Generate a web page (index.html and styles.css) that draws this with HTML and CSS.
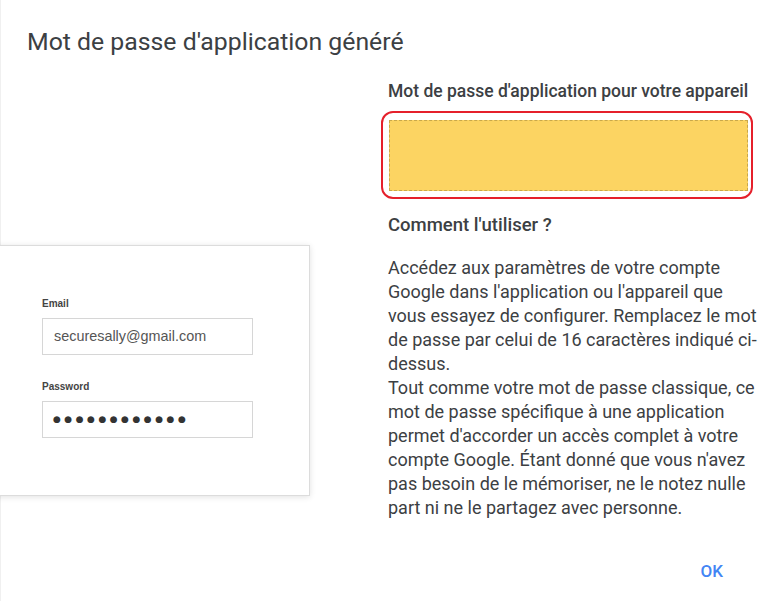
FILE: index.html
```html
<!DOCTYPE html>
<html lang="fr">
<head>
<meta charset="utf-8">
<link rel="stylesheet" href="styles.css">
</head>
<body>
<div class="dialog">
  <h1 class="title">Mot de passe d'application généré</h1>
  <div class="content">
    <div class="left">
      <div class="card">
        <div class="label">Email</div>
        <div class="field">securesally@gmail.com</div>
        <div class="label label-pw">Password</div>
        <div class="field dots">●●●●●●●●●●●●</div>
      </div>
    </div>
    <div class="right">
      <h2 class="subhead">Mot de passe d'application pour votre appareil</h2>
      <div class="highlight">
        <div class="pw-box"></div>
      </div>
      <h2 class="subhead how">Comment l'utiliser ?</h2>
      <p class="text">Accédez aux paramètres de votre compte Google dans l'application ou l'appareil que vous essayez de configurer. Remplacez le mot de passe par celui de 16 caractères indiqué ci-dessus.<br>Tout comme votre mot de passe classique, ce mot de passe spécifique à une application permet d'accorder un accès complet à votre compte Google. Étant donné que vous n'avez pas besoin de le mémoriser, ne le notez nulle part ni ne le partagez avec personne.</p>
    </div>
  </div>
  <div class="actions">
    <span class="ok">OK</span>
  </div>
</div>
</body>
</html>
```

FILE: styles.css
```css
html, body {
  margin: 0;
  padding: 0;
  background: #ffffff;
}
body {
  font-family: Roboto, "Liberation Sans", Arial, sans-serif;
  color: #3c4043;
  width: 768px;
  height: 601px;
  overflow: hidden;
}
.dialog {
  border-left: 1px solid #f0f0f0;
  height: 601px;
  box-sizing: border-box;
  display: flex;
  flex-direction: column;
}
.title {
  margin: 0;
  padding: 27px 0 0 26px;
  font-size: 24.8px;
  font-weight: 400;
  line-height: 30px;
  color: #3c4043;
}
.content {
  display: grid;
  grid-template-columns: 387px 370px;
  margin-top: 23px;
}
.left {
  padding-top: 165px;
}
.card {
  margin-left: -12px;
  width: 321px;
  height: 251px;
  box-sizing: border-box;
  border: 1px solid #dcdcdc;
  box-shadow: 0 1px 6px rgba(0,0,0,0.12);
  background: #fff;
  padding: 52px 0 0 52px;
  font-family: "Liberation Sans", Arial, sans-serif;
}
.label {
  font-size: 10px;
  font-weight: bold;
  color: #444;
  line-height: 12px;
  margin-bottom: 8px;
}
.label-pw {
  margin-top: 26px;
}
.field {
  width: 211px;
  height: 37px;
  box-sizing: border-box;
  border: 1px solid #d6d6d6;
  padding: 0 0 0 11px;
  font-size: 14.4px;
  line-height: 35px;
  color: #555;
}
.dots {
  font-family: "DejaVu Sans", sans-serif;
  font-size: 9px;
  letter-spacing: 3.5px;
  padding-left: 10px;
  color: #333;
}
.subhead {
  margin: 0;
  font-size: 17.5px;
  font-weight: 500;
  line-height: 22px;
  color: #3c4043;
}
.highlight {
  margin: 9px 0 0 -7px;
  width: 372px;
  box-sizing: border-box;
  border: 2px solid #e5202b;
  border-radius: 12px;
  padding: 7px 3px 6px 6px;
}
.pw-box {
  height: 71px;
  background: #fcd462;
  border: 1px dashed #c9a84a;
  box-sizing: border-box;
}
.how {
  margin-top: 15px;
  font-size: 18.5px;
}
.text {
  margin: 20px 0 0 0;
  font-size: 18px;
  line-height: 24px;
  color: #3c4043;
}
.actions {
  display: flex;
  justify-content: flex-end;
  padding: 0 45px 20px 0;
  margin-top: auto;
}
.ok {
  font-size: 17px;
  font-weight: 500;
  line-height: 20px;
  color: #4285f4;
}
```
